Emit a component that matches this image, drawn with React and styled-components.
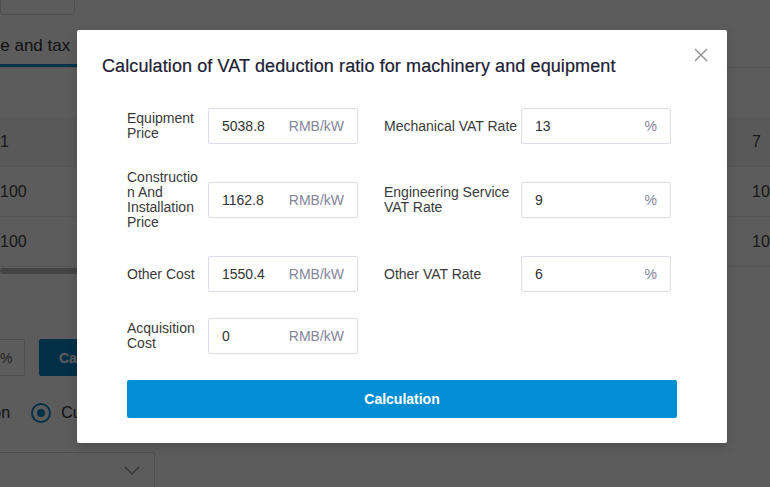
import React from "react";
import styled, { createGlobalStyle } from "styled-components";

const GlobalStyle = createGlobalStyle`
	* {
		box-sizing: border-box;
	}
	body {
		margin: 0;
		font-family: "Liberation Sans", Arial, sans-serif;
		color: #333;
	}
`;

const leftFields = [
	{ label: "Equipment Price", value: "5038.8", unit: "RMB/kW" },
	{ label: "Construction And Installation Price", value: "1162.8", unit: "RMB/kW" },
	{ label: "Other Cost", value: "1550.4", unit: "RMB/kW" },
	{ label: "Acquisition Cost", value: "0", unit: "RMB/kW" },
];

const rightFields = [
	{ label: "Mechanical VAT Rate", value: "13", unit: "%" },
	{ label: "Engineering Service VAT Rate", value: "9", unit: "%" },
	{ label: "Other VAT Rate", value: "6", unit: "%" },
];

const Field = ({ field, labelWidth }) => (
	<Item>
		<Label $w={labelWidth}>{field.label}</Label>
		<InputBox>
			<Value>{field.value}</Value>
			<Unit>{field.unit}</Unit>
		</InputBox>
	</Item>
);

const App = () => {
	return (
		<Page>
			<GlobalStyle />
			{/* page behind the dialog */}
			<TopSelect />
			<TabBar>
				<Tab>Price and tax</Tab>
			</TabBar>
			<Table>
				<Row $head>
					<Cell>1</Cell>
					<Cell>7</Cell>
				</Row>
				<Row>
					<Cell>100</Cell>
					<Cell>100</Cell>
				</Row>
				<Row>
					<Cell>100</Cell>
					<Cell>100</Cell>
				</Row>
				<ScrollThumb />
			</Table>
			<Controls>
				<SmallInput>%</SmallInput>
				<DarkButton>Calculation</DarkButton>
			</Controls>
			<RadioRow>
				<RadioText>Option</RadioText>
				<Radio />
				<RadioText>Custom</RadioText>
			</RadioRow>
			<BottomSelect>
				<svg width="16" height="10" viewBox="0 0 16 10">
					<path d="M1 1l7 7 7-7" fill="none" stroke="#888" strokeWidth="1.2" />
				</svg>
			</BottomSelect>

			<Overlay />
			<Modal>
				<Title>Calculation of VAT deduction ratio for machinery and equipment</Title>
				<Close aria-label="close">
					<svg width="14" height="14" viewBox="0 0 14 14">
						<path d="M1 1l12 12M13 1L1 13" stroke="#8f8f8f" strokeWidth="1.4" />
					</svg>
				</Close>
				<Form>
					<Column>
						{leftFields.map((f) => (
							<Field key={f.label} field={f} labelWidth={81} />
						))}
					</Column>
					<Column>
						{rightFields.map((f) => (
							<Field key={f.label} field={f} labelWidth={137} />
						))}
					</Column>
				</Form>
				<Submit>Calculation</Submit>
			</Modal>
		</Page>
	);
};

export default App;

const Page = styled.div`
	position: relative;
	width: 770px;
	height: 487px;
	overflow: hidden;
	background: #fff;
	display: flex;
	flex-direction: column;
`;

const TopSelect = styled.div`
	width: 75px;
	height: 33px;
	margin-top: -18px;
	border: 1px solid #d9d9d9;
	border-radius: 2px;
	flex-shrink: 0;
`;

const TabBar = styled.div`
	display: flex;
	height: 53px;
	border-bottom: 1px solid #e6e6e6;
	flex-shrink: 0;
`;

const Tab = styled.div`
	margin-left: -29px;
	padding: 13px 12px 0 0;
	width: 240px;
	height: 52px;
	display: flex;
	align-items: center;
	font-size: 17px;
	color: #333;
	white-space: nowrap;
	border-bottom: 3px solid #008ed4;
`;

const Table = styled.div`
	margin-top: 49px;
	flex-shrink: 0;
`;

const Row = styled.div`
	display: grid;
	grid-template-columns: 752px 60px;
	height: 50px;
	align-items: center;
	font-size: 16px;
	color: #444;
	background: ${({ $head }) => ($head ? "#f7f7f7" : "#fff")};
	border-bottom: 1px solid #eee;
`;

const Cell = styled.div`
	white-space: nowrap;
`;

const ScrollThumb = styled.div`
	width: 420px;
	height: 6px;
	margin-top: 1px;
	border-radius: 3px;
	background: #bdbdbd;
`;

const Controls = styled.div`
	margin-top: 65px;
	height: 37px;
	display: flex;
	gap: 14px;
	flex-shrink: 0;
`;

const SmallInput = styled.div`
	width: 25px;
	border: 1px solid #d9d9d9;
	border-left: none;
	border-radius: 0 2px 2px 0;
	display: flex;
	align-items: center;
	font-size: 14px;
	color: #666;
`;

const DarkButton = styled.div`
	width: 140px;
	padding-left: 20px;
	display: flex;
	align-items: center;
	font-size: 14px;
	font-weight: 700;
	color: #fff;
	background: #0b86c4;
	border-radius: 2px;
`;

const RadioRow = styled.div`
	margin-top: 27px;
	margin-left: -37px;
	height: 20px;
	display: flex;
	align-items: center;
	gap: 10px;
	font-size: 16px;
	flex-shrink: 0;
`;

const RadioText = styled.span`
	color: #333;
	margin-right: 11px;
	&:last-child {
		margin-right: 0;
	}
`;

const Radio = styled.span`
	width: 20px;
	height: 20px;
	border-radius: 50%;
	border: 2px solid #0b86c4;
	display: flex;
	align-items: center;
	justify-content: center;
	&::after {
		content: "";
		width: 8px;
		height: 8px;
		border-radius: 50%;
		background: #0b86c4;
	}
`;

const BottomSelect = styled.div`
	margin-top: 29px;
	width: 155px;
	height: 37px;
	border: 1px solid #d9d9d9;
	border-left: none;
	border-radius: 0 2px 2px 0;
	display: flex;
	align-items: center;
	justify-content: flex-end;
	padding-right: 14px;
	flex-shrink: 0;
`;

const Overlay = styled.div`
	position: absolute;
	inset: 0;
	background: rgba(0, 0, 0, 0.64);
`;

const Modal = styled.div`
	position: absolute;
	left: 77px;
	top: 30px;
	width: 650px;
	background: #fff;
	border-radius: 2px;
	padding: 24px 50px 25px 50px;
	box-shadow: 0 4px 12px rgba(0, 0, 0, 0.15);
`;

const Title = styled.h2`
	margin: 0 0 30px -25px;
	font-size: 18px;
	line-height: 24px;
	font-weight: 400;
	letter-spacing: 0.1px;
	color: #202033;
	white-space: nowrap;
	-webkit-text-stroke: 0.2px #202033;
`;

const Close = styled.button`
	position: absolute;
	top: 18px;
	right: 19px;
	width: 14px;
	height: 14px;
	padding: 0;
	border: none;
	background: none;
	display: flex;
	cursor: pointer;
`;

const Form = styled.div`
	display: grid;
	grid-template-columns: 231px 287px;
	column-gap: 26px;
`;

const Column = styled.div`
	display: flex;
	flex-direction: column;
	gap: 26px;
`;

const Item = styled.div`
	display: flex;
	align-items: center;
	min-height: 36px;
	&:nth-child(2) {
		min-height: 60px;
	}
`;

const Label = styled.div`
	width: ${({ $w }) => $w}px;
	flex-shrink: 0;
	padding-right: ${({ $w }) => ($w < 100 ? 4 : 0)}px;
	font-size: 14px;
	line-height: 15px;
	color: #3a3a3a;
	overflow-wrap: anywhere;
`;

const InputBox = styled.div`
	width: 150px;
	height: 36px;
	border: 1px solid #dcdcea;
	border-radius: 2px;
	padding: 0 13px;
	display: flex;
	align-items: center;
	justify-content: space-between;
	font-size: 14px;
`;

const Value = styled.span`
	color: #333;
`;

const Unit = styled.span`
	color: #85859a;
`;

const Submit = styled.button`
	margin-top: 26px;
	width: 100%;
	height: 38px;
	border: none;
	border-radius: 2px;
	background: #008ed4;
	color: #fff;
	font-family: inherit;
	font-size: 14px;
	font-weight: 700;
	cursor: pointer;
`;
